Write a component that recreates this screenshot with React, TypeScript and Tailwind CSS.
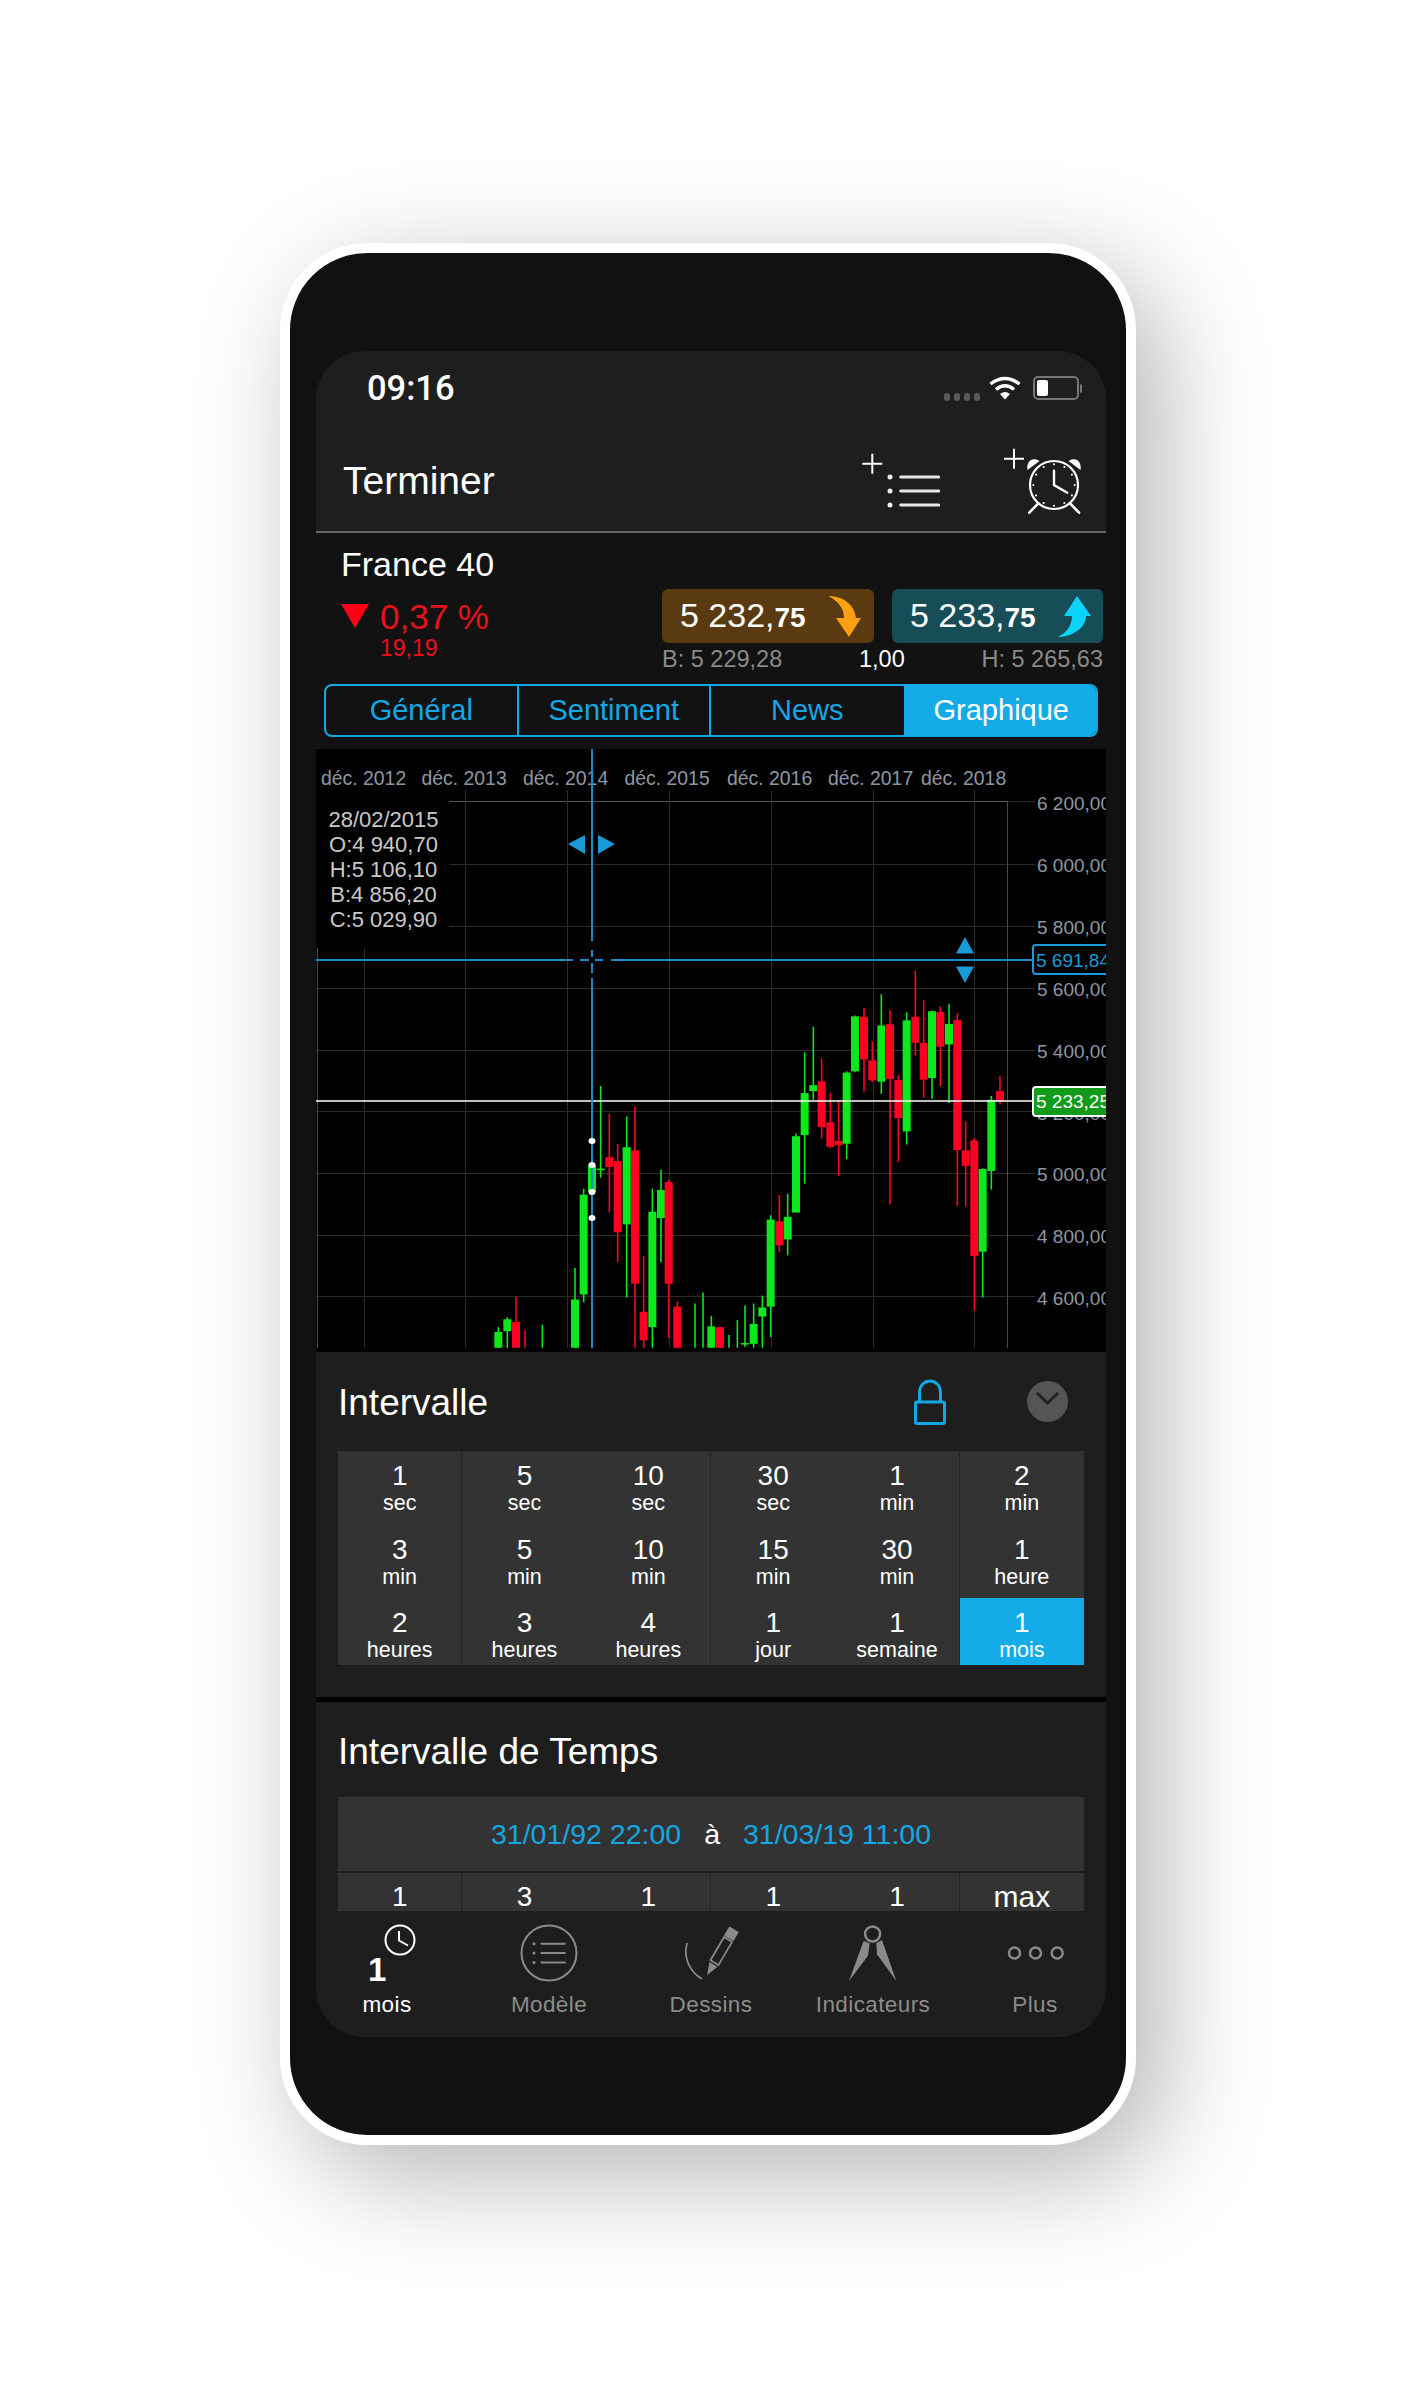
type Candle = [string, number, number, number, number, number];

const ticks = [0, 30, 60, 90, 120, 150, 180, 210, 240, 270, 300, 330];

// candles are noted as [colour, x, high, low, body top, body bottom]
const leftCandles: Candle[] = [
  ["g", 595, 1485, 1537, 1497, 1537],
  ["g", 622, 1460, 1537, 1465, 1495],
  ["r", 648, 1408, 1537, 1472, 1537],
  ["r", 675, 1493, 1537, 0, 0],
  ["g", 727, 1479, 1537, 0, 0],
  ["g", 825, 1335, 1537, 1415, 1537],
  ["g", 851, 1135, 1422, 1150, 1402],
  ["g", 876, 1014, 1210, 1074, 1143],
  ["g", 902, 875, 1107, 1084, 1088],
  ["r", 928, 945, 1195, 1055, 1080],
  ["r", 953, 1022, 1320, 1065, 1245],
  ["g", 980, 952, 1410, 1030, 1225],
  ["r", 1005, 927, 1537, 1038, 1375],
  ["r", 1031, 1305, 1537, 1446, 1518],
  ["g", 1057, 1135, 1537, 1193, 1485],
  ["g", 1083, 1087, 1320, 1138, 1209],
  ["r", 1106, 1113, 1512, 1118, 1375],
  ["r", 1132, 1420, 1537, 1433, 1537],
  ["g", 1185, 1425, 1537, 0, 0],
  ["g", 1209, 1397, 1537, 0, 0],
  ["g", 1234, 1457, 1537, 1483, 1537],
  ["r", 1260, 1485, 1537, 1485, 1537],
];

const rightCandles: Candle[] = [
  ["g", 27, 1505, 1537, 0, 0],
  ["g", 52, 1467, 1537, 0, 0],
  ["g", 75, 1430, 1535, 1525, 1529],
  ["g", 101, 1425, 1537, 1477, 1527],
  ["g", 127, 1405, 1537, 1435, 1458],
  ["g", 152, 1202, 1510, 1213, 1433],
  ["r", 178, 1151, 1295, 1217, 1278],
  ["g", 203, 1148, 1303, 1206, 1263],
  ["g", 228, 995, 1195, 1002, 1195],
  ["g", 254, 790, 1122, 893, 999],
  ["g", 280, 725, 910, 873, 888],
  ["r", 305, 805, 1008, 863, 979],
  ["r", 331, 893, 1032, 967, 1029],
  ["r", 356, 915, 1102, 1014, 1025],
  ["g", 380, 838, 1060, 841, 1021],
  ["g", 405, 697, 840, 699, 838],
  ["r", 432, 678, 888, 700, 808],
  ["r", 457, 762, 865, 810, 861],
  ["g", 484, 643, 895, 722, 864],
  ["r", 510, 684, 1175, 719, 857],
  ["r", 535, 848, 1067, 860, 956],
  ["g", 560, 689, 1023, 709, 990],
  ["r", 586, 583, 798, 700, 766],
  ["r", 611, 658, 905, 766, 859],
  ["g", 636, 684, 907, 686, 855],
  ["r", 661, 674, 875, 688, 776],
  ["g", 687, 668, 918, 718, 770],
  ["r", 712, 690, 1178, 708, 1037],
  ["r", 737, 964, 1180, 1038, 1077],
  ["r", 763, 1007, 1443, 1013, 1305],
  ["g", 788, 1083, 1410, 1085, 1294],
  ["g", 814, 900, 1137, 910, 1090],
  ["r", 840, 850, 922, 888, 915],
];

const toY = (v: number) => 740 + v / 2.529;

const dateLabels: [number, string][] = [
  [321, "déc. 2012"],
  [421.5, "déc. 2013"],
  [523, "déc. 2014"],
  [624.5, "déc. 2015"],
  [727, "déc. 2016"],
  [828, "déc. 2017"],
  [921, "déc. 2018"],
];

const priceLabels: [number, string][] = [
  [810, "6 200,00"],
  [872, "6 000,00"],
  [934, "5 800,00"],
  [996, "5 600,00"],
  [1058, "5 400,00"],
  [1120, "5 200,00"],
  [1181, "5 000,00"],
  [1243, "4 800,00"],
  [1305, "4 600,00"],
];

const gridRows = [864, 926, 988, 1050, 1111, 1173, 1235, 1296];
const gridCols = [364, 465, 567, 669, 771, 873, 974];

const infoLines: [number, string][] = [
  [827, "28/02/2015"],
  [852, "O:4 940,70"],
  [877, "H:5 106,10"],
  [902, "B:4 856,20"],
  [927, "C:5 029,90"],
];

const intervals = [
  ["1", "sec"],
  ["5", "sec"],
  ["10", "sec"],
  ["30", "sec"],
  ["1", "min"],
  ["2", "min"],
  ["3", "min"],
  ["5", "min"],
  ["10", "min"],
  ["15", "min"],
  ["30", "min"],
  ["1", "heure"],
  ["2", "heures"],
  ["3", "heures"],
  ["4", "heures"],
  ["1", "jour"],
  ["1", "semaine"],
  ["1", "mois"],
];

const ranges = ["1", "3", "1", "1", "1", "max"];

function CandleMark({ c, x }: { c: Candle; x: number }) {
  const color = c[0] === "g" ? "#0ce81c" : "#ff0022";
  const hasBody = c[5] > c[4];
  return (
    <g>
      <line x1={x} x2={x} y1={toY(c[2])} y2={toY(c[3])} stroke={color} strokeWidth={1.6} />
      {hasBody ? (
        <rect x={x - 4} y={toY(c[4])} width={8} height={Math.max(toY(c[5]) - toY(c[4]), 1.5)} fill={color} />
      ) : null}
    </g>
  );
}

function Chart() {
  return (
    <svg viewBox="316 749 790 603" className="block h-[603px] w-[790px] bg-black">
      {dateLabels.map(([x, label]) => (
        <text key={label} x={x} y={785} fontSize={19.4} fill="#8d97a3">
          {label}
        </text>
      ))}
      <line x1={449} x2={1007} y1={801.5} y2={801.5} stroke="#555555" strokeWidth={1} />
      {gridRows.map((y) => (
        <line key={y} x1={y < 940 ? 449 : 316} x2={1035} y1={y + 0.5} y2={y + 0.5} stroke="#2c2c2c" strokeWidth={1} />
      ))}
      <line x1={1007} x2={1035} y1={801.5} y2={801.5} stroke="#2c2c2c" strokeWidth={1} />
      {gridCols.map((x) => (
        <line key={x} x1={x + 0.5} x2={x + 0.5} y1={x < 449 ? 948 : 790} y2={1348} stroke="#2c2c2c" strokeWidth={1} />
      ))}
      <line x1={1007.5} x2={1007.5} y1={801} y2={1348} stroke="#4a4a4a" strokeWidth={1} />
      <line x1={317.5} x2={317.5} y1={948} y2={1348} stroke="#4a4a4a" strokeWidth={1} />

      {priceLabels.map(([y, label]) => (
        <text key={label} x={1037} y={y} fontSize={19} fill="#8d97a3">
          {label}
        </text>
      ))}

      {infoLines.map(([y, label]) => (
        <text key={label} x={383.5} y={y} fontSize={22} fill="#c8c8c8" textAnchor="middle">
          {label}
        </text>
      ))}

      {leftCandles.map((c) => (
        <CandleMark key={`l${c[1]}`} c={c} x={300 + c[1] / 3} />
      ))}
      {rightCandles.map((c) => (
        <CandleMark key={`r${c[1]}`} c={c} x={720 + c[1] / 3} />
      ))}

      <line x1={316} x2={1032} y1={1101} y2={1101} stroke="#ffffff" strokeWidth={1.5} />
      <rect x={1033} y={1087} width={90} height={29} rx={3} fill="#129a1a" stroke="#ffffff" strokeWidth={2} />
      <text x={1036} y={1108} fontSize={19} fill="#ffffff">
        5 233,25
      </text>

      <g stroke="#1a8cc6" strokeWidth={2}>
        <line x1={316} x2={573} y1={960} y2={960} />
        <line x1={580} x2={589} y1={960} y2={960} />
        <line x1={595} x2={603} y1={960} y2={960} />
        <line x1={611} x2={1032} y1={960} y2={960} />
        <line x1={592} x2={592} y1={749} y2={941} />
        <line x1={592} x2={592} y1={950} y2={957} />
        <line x1={592} x2={592} y1={963} y2={973} />
        <line x1={592} x2={592} y1={978} y2={1348} />
      </g>
      <rect x={1033} y={945} width={90} height={29} rx={3} fill="#000000" stroke="#1a9ad6" strokeWidth={2} />
      <text x={1036} y={967} fontSize={19} fill="#1a9ad6">
        5 691,84
      </text>

      <g fill="#1a9ad6">
        <polygon points="568,844 585,835 585,854" />
        <polygon points="615,844 598,835 598,854" />
        <polygon points="965,937 956,953.5 974,953.5" />
        <polygon points="965,983 956,966.5 974,966.5" />
      </g>

      <g fill="#ffffff">
        <ellipse cx={592} cy={1141} rx={3.5} ry={3} />
        <ellipse cx={592} cy={1165} rx={3.5} ry={3} />
        <ellipse cx={592} cy={1192} rx={3.5} ry={3} />
        <ellipse cx={592} cy={1218} rx={3.5} ry={3} />
      </g>
      <rect x={316} y={1348} width={790} height={4} fill="#000000" />
    </svg>
  );
}

function StatusIcons() {
  return (
    <div className="flex items-center">
      <div className="mt-[18px] flex gap-[4px]">
        <span className="h-[8px] w-[6px] rounded-full bg-[#5a5a5a]" />
        <span className="h-[8px] w-[6px] rounded-full bg-[#5a5a5a]" />
        <span className="h-[8px] w-[6px] rounded-full bg-[#5a5a5a]" />
        <span className="h-[8px] w-[6px] rounded-full bg-[#5a5a5a]" />
      </div>
      <svg viewBox="0 0 32 24" className="ml-[9px] h-[24px] w-[32px]" fill="none" stroke="#ffffff" strokeWidth={3.4}>
        <path d="M1.5 8 Q16 -3 30.5 8" />
        <path d="M7 13.5 Q16 6 25 13.5" />
        <path d="M16 23.5 L11 18 Q16 14 21 18 Z" fill="#ffffff" stroke="none" />
      </svg>
      <div className="ml-[12px] flex items-center">
        <div className="flex h-[24px] w-[46px] items-center rounded-[5px] border-2 border-[#777] px-[2px]">
          <span className="h-[16px] w-[11px] rounded-[2px] bg-white" />
        </div>
        <span className="ml-[1px] h-[9px] w-[2px] rounded-r-full bg-[#777]" />
      </div>
    </div>
  );
}

function ListAddIcon() {
  return (
    <svg viewBox="0 0 80 60" className="mt-[25px] h-[60px] w-[80px]" fill="none" stroke="#ffffff" strokeWidth={2}>
      <path d="M10.3 3.7 V23.7 M0.3 13.7 H20.3" />
      <path d="M38.7 27 H76.7 M38.7 41 H76.7 M38.7 55 H76.7" strokeWidth={3} strokeLinecap="round" stroke="#e8e8e8" />
      <g fill="#f0f0f0" stroke="none">
        <circle cx={28} cy={27} r={2.5} />
        <circle cx={28} cy={41} r={2.5} />
        <circle cx={28} cy={55} r={2.5} />
      </g>
    </svg>
  );
}

function AlarmAddIcon() {
  return (
    <svg viewBox="0 0 82 70" className="mt-[23px] h-[70px] w-[82px]" fill="none" stroke="#ffffff" strokeWidth={2}>
      <path d="M12 0.7 V20.7 M2 10.7 H22" />
      <circle cx={52} cy={37} r={24} strokeWidth={2.2} />
      <path d="M25.5 22 C24 14 30 8 37.5 13 Z" fill="#ffffff" stroke="none" />
      <path d="M78.5 22 C80 14 74 8 66.5 13 Z" fill="#ffffff" stroke="none" />
      <path d="M36.3 55.3 L27.3 64.7 M68 55.3 L77 64.7" strokeWidth={2.6} strokeLinecap="round" />
      <path d="M52 22.7 V37 L65.3 44.7" strokeWidth={2.4} strokeLinecap="round" />
      {ticks.map((a) => (
        <circle key={a} cx={52} cy={16.3} r={1} fill="#ffffff" stroke="none" transform={`rotate(${a} 52 37)`} />
      ))}
    </svg>
  );
}

function TabIcon({ name }: { name: string }) {
  if (name === "mois") {
    return (
      <div className="relative h-[66px] w-[60px]">
        <svg viewBox="0 0 34 34" className="absolute top-[12px] left-[26px] h-[34px] w-[34px]" fill="none" stroke="#ffffff" strokeWidth={2}>
          <circle cx={17} cy={17} r={14.5} />
          <path d="M16 8 V17.5 L25 22.5" />
        </svg>
        <span className="absolute top-[41px] left-[11px] text-[33px] leading-[36px] font-bold text-white">1</span>
      </div>
    );
  }
  if (name === "Modèle") {
    return (
      <svg viewBox="0 0 60 60" className="mt-[12px] h-[60px] w-[60px]" fill="none" stroke="#8a8a8a" strokeWidth={2}>
        <circle cx={30} cy={30} r={27.5} />
        <path d="M21.6 20.7 H46.6 M21.6 30 H46.6 M21.6 39.4 H46.6" />
        <circle cx={15} cy={20.7} r={1.5} fill="#8a8a8a" stroke="none" />
        <circle cx={15} cy={30} r={1.5} fill="#8a8a8a" stroke="none" />
        <circle cx={15} cy={39.4} r={1.5} fill="#8a8a8a" stroke="none" />
      </svg>
    );
  }
  if (name === "Dessins") {
    return (
      <svg viewBox="0 0 58 56" className="mt-[14px] h-[56px] w-[58px]" fill="none" stroke="#8a8a8a" strokeWidth={1.8}>
        <path d="M5 18 C1 33 8 47 20 54" />
        <path d="M50.1 16.9 L42.1 12.1 L28.4 35.3 L36.4 40.1 Z" />
        <path d="M55.7 7.4 L47.7 2.6 L43.1 10.3 L51.1 15.1 Z" fill="#8a8a8a" strokeLinejoin="round" />
        <path d="M35.4 41.8 L27.4 37 L25 50.3 Z" fill="#8a8a8a" stroke="none" />
      </svg>
    );
  }
  if (name === "Indicateurs") {
    return (
      <svg viewBox="0 0 48 56" className="mt-[15px] h-[56px] w-[48px] overflow-visible" fill="none" stroke="#8a8a8a" strokeWidth={2.5}>
        <circle cx={23.6} cy={8} r={7.5} />
        <path d="M14.6 15 L20.6 17.3 L19 29.7 L0 55 Z" fill="#8a8a8a" stroke="none" />
        <path d="M33 14 L27.3 17.3 L28 28.3 L47.3 55 Z" fill="#8a8a8a" stroke="none" />
      </svg>
    );
  }
  return (
    <svg viewBox="0 0 60 16" className="mt-[34px] mb-[16px] h-[16px] w-[60px]" fill="none" stroke="#8a8a8a" strokeWidth={2.5}>
      <circle cx={9.5} cy={8} r={5.5} />
      <circle cx={30.5} cy={8} r={5.5} />
      <circle cx={52.2} cy={8} r={5.5} />
    </svg>
  );
}

function IntervalCell({ value, unit, index }: { value: string; unit: string; index: number }) {
  const divider = index % 2 === 0;
  const active = index === 17;
  return (
    <div
      className={[
        "flex flex-col items-center pt-[9px] text-white",
        divider && index % 6 !== 5 ? "border-r border-[#252525]" : "",
        active ? "bg-[#13ace8]" : "",
      ].join(" ")}
    >
      <span className="text-[28px] leading-[32px]">{value}</span>
      <span className="text-[21.5px] leading-[22px]">{unit}</span>
    </div>
  );
}

export default function App() {
  return (
    <div className="flex h-[2387px] justify-center overflow-hidden bg-white pt-[243px] pr-[2px] font-['Liberation_Sans',Arial,sans-serif]">
      <div className="h-[1902px] w-[856px] rounded-[87px] border-[10px] border-white bg-[#111111] px-[26px] pt-[98px] shadow-[25px_30px_110px_rgba(0,0,0,0.3)]">
        <div className="flex h-[1686px] w-[790px] flex-col overflow-hidden rounded-[48px] bg-[#121212]">
          <header className="h-[182px] border-b-2 border-[#666] bg-[#1e1e1e]">
            <div className="flex h-[74px] items-center justify-between pr-[24px] pl-[51px]">
              <span className="font-['Roboto',sans-serif] text-[34.5px] leading-[40px] font-medium text-white">09:16</span>
              <StatusIcons />
            </div>
            <div className="flex justify-between pr-[22px] pl-[27px]">
              <span className="mt-[34px] text-[39px] leading-[44px] text-white">Terminer</span>
              <div className="flex gap-[60px]">
                <ListAddIcon />
                <AlarmAddIcon />
              </div>
            </div>
          </header>

          <section className="h-[216px] bg-[#121212] pt-[11px]">
            <h1 className="pl-[25px] text-[34px] leading-[40px] text-white">France 40</h1>
            <div className="mt-[5px] flex">
              <div className="flex w-[346px] pl-[25px]">
                <svg viewBox="0 0 28 24" className="mt-[15px] h-[24px] w-[28px]">
                  <polygon points="0,0 28,0 14,24" fill="#ff0018" />
                </svg>
                <div className="ml-[11px] mt-[8px] flex flex-col">
                  <span className="text-[35px] leading-[40px] text-[#e8101a]">0,37 %</span>
                  <span className="-mt-px text-[23px] leading-[24px] text-[#e8101a]">19,19</span>
                </div>
              </div>
              <div className="w-[441px]">
                <div className="flex gap-[18px]">
                  <div className="flex h-[54px] w-[212px] items-center justify-between rounded-[6px] bg-[#5a3a10] pr-[12px] pl-[18px] text-white">
                    <span className="text-[34px] leading-[40px]">
                      5 232,<span className="text-[28px] font-bold">75</span>
                    </span>
                    <svg viewBox="0 0 34 41" className="h-[41px] w-[34px]">
                      <path d="M0.5 0 C12 0 26 6 28 22 L33 22 L21 41 L8 22 L16 22 C16 12 10 5 0.5 0 Z" fill="#ffa012" />
                    </svg>
                  </div>
                  <div className="flex h-[54px] w-[211px] items-center justify-between rounded-[6px] bg-[#164d57] pr-[11px] pl-[18px] text-white">
                    <span className="text-[34px] leading-[40px]">
                      5 233,<span className="text-[28px] font-bold">75</span>
                    </span>
                    <svg viewBox="0 0 34 41" className="h-[41px] w-[34px]">
                      <path d="M19 0 L33 20 L28 20 C28 32 14 41 0 41 C8 37 14 30 14 20 L6 20 Z" fill="#0cd4f8" />
                    </svg>
                  </div>
                </div>
                <div className="mt-[3px] flex justify-between text-[23.5px] leading-[26px] text-[#8a8a8a]">
                  <span>B: 5 229,28</span>
                  <span className="text-white">1,00</span>
                  <span>H: 5 265,63</span>
                </div>
              </div>
            </div>
            <div className="mx-[8px] mt-[12px] grid h-[53px] grid-cols-4 overflow-hidden rounded-[8px] border-2 border-[#13a8e5] text-[29px] leading-[49px] text-[#13a8e5]">
              <div className="border-r-2 border-[#13a8e5] text-center">Général</div>
              <div className="border-r-2 border-[#13a8e5] text-center">Sentiment</div>
              <div className="text-center">News</div>
              <div className="bg-[#13ace8] pl-[3px] text-center text-white">Graphique</div>
            </div>
          </section>

          <Chart />

          <section className="h-[345px] bg-[#1e1e1e] px-[22px]">
            <div className="flex h-[99px] items-start justify-between">
              <h2 className="mt-[28px] text-[37px] leading-[46px] text-white">Intervalle</h2>
              <div className="flex pr-[16px]">
                <svg viewBox="0 0 32 46" className="mt-[27px] h-[46px] w-[32px]" fill="none" stroke="#13a8e5" strokeWidth={3}>
                  <path d="M5.5 23 V14 C5.5 -2 26.5 -2 26.5 14 V23" />
                  <rect x={1.5} y={23} width={29} height={21.5} rx={1.5} />
                </svg>
                <svg viewBox="0 0 41 41" className="mt-[29px] ml-[81px] h-[41px] w-[41px]">
                  <circle cx={20.5} cy={20.5} r={20.5} fill="#555555" />
                  <path d="M10 12 L20.5 22 L31 12" fill="none" stroke="#222222" strokeWidth={3} />
                </svg>
              </div>
            </div>
            <div className="grid grid-cols-6 grid-rows-[73.5px_73.5px_67px] bg-[#333333]">
              {intervals.map(([value, unit], i) => (
                <IntervalCell key={`${value}${unit}`} value={value} unit={unit} index={i} />
              ))}
            </div>
          </section>

          <div className="h-[5px] shrink-0 bg-black" />

          <section className="h-[209px] shrink-0 bg-[#1e1e1e] px-[22px]">
            <h2 className="pt-[27px] text-[37px] leading-[46px] text-white">Intervalle de Temps</h2>
            <div className="mt-[22px] flex h-[74px] items-center justify-center bg-[#333333] text-[28.5px] text-[#13a8e5]">
              <span>31/01/92 22:00</span>
              <span className="mx-[23px] text-white">à</span>
              <span>31/03/19 11:00</span>
            </div>
            <div className="mt-[2px] grid h-[38px] grid-cols-6 overflow-hidden bg-[#333333] text-center text-white">
              {ranges.map((label, i) => (
                <div
                  key={`${label}${i}`}
                  className={[
                    "pt-[8px] leading-[32px]",
                    label === "max" ? "text-[30px]" : "text-[28px]",
                    i % 2 === 0 && i < 5 ? "border-r border-[#252525]" : "",
                  ].join(" ")}
                >
                  {label}
                </div>
              ))}
            </div>
          </section>

          <nav className="flex h-[126px] shrink-0 justify-center bg-[#1e1e1e] text-[22.5px] tracking-[0.4px] text-[#8c8c8c]">
            {["mois", "Modèle", "Dessins", "Indicateurs", "Plus"].map((name) => (
              <div key={name} className="flex w-[162px] shrink-0 flex-col items-center">
                <div className="flex h-[76px] justify-center">
                  <TabIcon name={name} />
                </div>
                <span className={name === "mois" ? "mt-[2px] leading-[32px] text-white" : "mt-[2px] leading-[32px]"}>{name}</span>
              </div>
            ))}
          </nav>
        </div>
      </div>
    </div>
  );
}
